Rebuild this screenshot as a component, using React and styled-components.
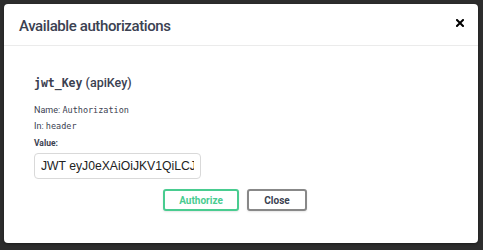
import React from 'react';
import styled, { createGlobalStyle } from 'styled-components';

const GlobalStyle = createGlobalStyle`
  html, body {
    margin: 0;
    padding: 0;
    background: #2d2d2d;
  }
  * {
    box-sizing: border-box;
  }
`;

const Backdrop = styled.div`
  width: 483px;
  height: 250px;
  padding: 4px 5px 7px 4px;
  background: #2d2d2d;
`;

const Modal = styled.div`
  height: 239px;
  background: #fff;
  border-radius: 4px;
  box-shadow: 0 1px 3px rgba(0, 0, 0, 0.4);
  display: flex;
  flex-direction: column;
  font-family: Roboto, "Open Sans", sans-serif;
  color: #3b4151;
`;

const Header = styled.div`
  height: 42px;
  display: flex;
  align-items: center;
  justify-content: space-between;
  padding: 0 13px 0 15px;
  border-bottom: 1px solid #ebebeb;
`;

const Title = styled.h3`
  margin: 2px 0 0 0;
  font-size: 15px;
  font-weight: 500;
  letter-spacing: -0.4px;
  color: #3b4151;
`;

const CloseIcon = styled.button`
  border: none;
  background: none;
  padding: 0;
  width: 10px;
  height: 10px;
  display: flex;
  align-items: center;
  justify-content: center;
  margin-top: -4px;
`;

const Body = styled.div`
  padding: 29px 30px 0 30px;
  display: flex;
  flex-direction: column;
`;

const SchemeTitle = styled.h4`
  margin: 0 0 15px 0;
  font-size: 12.5px;
  font-weight: 500;
  color: #3b4151;
`;

const Code = styled.code`
  font-family: "DejaVu Sans Mono", monospace;
  font-size: 11.5px;
  font-weight: 600;
`;

const Meta = styled.p`
  margin: 0 0 6px 0;
  font-size: 9px;
  color: #3b4151;

  code {
    font-family: "DejaVu Sans Mono", monospace;
    font-size: 8.5px;
  }
`;

const Label = styled.label`
  margin: 1px 0 5px 0;
  font-size: 8.5px;
  font-weight: 700;
  color: #3b4151;
`;

const Input = styled.input`
  width: 167px;
  height: 26px;
  padding: 0 6px;
  border: 1px solid #d9d9d9;
  border-radius: 4px;
  font-family: "Liberation Sans", Arial, sans-serif;
  font-size: 12.2px;
  color: #222;
  outline: none;
`;

const Actions = styled.div`
  display: flex;
  justify-content: center;
  gap: 8px;
  padding: 10px 12px 0 0;
`;

const Button = styled.button`
  height: 22px;
  min-width: ${(p) => p.$w}px;
  padding: 0 10px;
  border: 2px solid ${(p) => (p.$primary ? '#49cc90' : '#888')};
  border-radius: 3px;
  background: #fff;
  color: ${(p) => (p.$primary ? '#49cc90' : '#3b4151')};
  font-family: Roboto, "Open Sans", sans-serif;
  font-size: 10px;
  font-weight: 700;
  box-shadow: 0 1px 2px rgba(0, 0, 0, 0.1);
`;

export default function App() {
  return (
    <>
      <GlobalStyle />
      <Backdrop>
        <Modal>
          <Header>
            <Title>Available authorizations</Title>
            <CloseIcon aria-label="close">
              <svg width="8" height="8" viewBox="0 0 8 8">
                <path d="M1 1L7 7M7 1L1 7" stroke="#000" strokeWidth="2" strokeLinecap="square" />
              </svg>
            </CloseIcon>
          </Header>
          <Body>
            <SchemeTitle>
              <Code>jwt_Key</Code> (apiKey)
            </SchemeTitle>
            <Meta>
              Name: <code>Authorization</code>
            </Meta>
            <Meta>
              In: <code>header</code>
            </Meta>
            <Label>Value:</Label>
            <Input defaultValue="JWT eyJ0eXAiOiJKV1QiLCJhbGciOiJIUzI1NiJ9" />
            <Actions>
              <Button $primary $w={76}>Authorize</Button>
              <Button $w={60}>Close</Button>
            </Actions>
          </Body>
        </Modal>
      </Backdrop>
    </>
  );
}
